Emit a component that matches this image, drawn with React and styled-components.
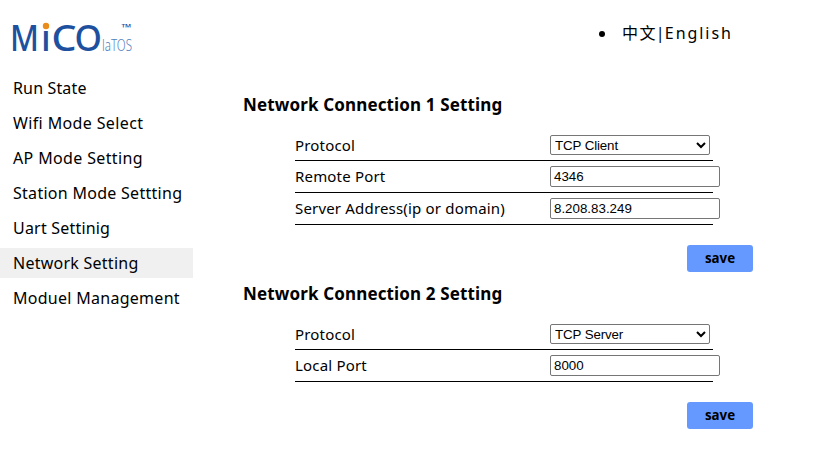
import React from 'react';
import styled, { createGlobalStyle } from 'styled-components';

const GlobalStyle = createGlobalStyle`
  * { box-sizing: border-box; }
  body {
    margin: 0;
    background: #fff;
    color: #000;
    font-family: "Noto Sans", "Noto Sans CJK SC", sans-serif;
    font-size: 16px;
  }
`;

const Page = styled.div`
  width: 831px;
  height: 472px;
  display: flex;
  flex-direction: column;
  overflow: hidden;
`;

const Header = styled.header`
  height: 73px;
  display: flex;
  justify-content: space-between;
  align-items: flex-start;
`;

const LogoMark = styled.svg`
  display: block;
  width: 150px;
  height: 70px;
  overflow: visible;
`;

const Languages = styled.ul`
  margin: 21px 0 0;
  padding: 0;
  width: 214px;
  line-height: 24px;
  white-space: nowrap;

  li { padding-left: 5px; }
`;

const Language = styled.span`
  letter-spacing: ${(p) => p.$spacing}px;
`;

const Divider = styled.span`
  display: inline-block;
  width: 8px;
  text-indent: -1px;
`;

const Body = styled.div`
  display: flex;
`;

const Sidebar = styled.nav`
  width: 193px;
  display: flex;
  flex-direction: column;
  gap: 5px;
`;

const NavItem = styled.a`
  height: 30px;
  padding-left: 13px;
  line-height: 30px;
  letter-spacing: ${(p) => p.$spacing || 0}px;
  white-space: nowrap;
  background: ${(p) => (p.$active ? '#f0f0f0' : 'transparent')};
`;

const Content = styled.main`
  width: 510px;
  margin-left: 50px;
  padding-top: 20px;
`;

const Section = styled.section`
  display: flex;
  flex-direction: column;
  margin-bottom: 10px;
`;

const Title = styled.h3`
  margin: 0 0 13px;
  font-size: 17px;
  font-weight: 700;
  line-height: 24px;
  letter-spacing: 0.14px;
  white-space: nowrap;
`;

const Row = styled.div`
  width: 418px;
  height: ${(p) => (p.$first ? 31 : 32)}px;
  margin-left: 52px;
  padding-top: 5px;
  display: flex;
  align-items: flex-start;
  border-bottom: 1px solid #000;
`;

const Label = styled.label`
  flex: 0 0 255px;
  font-size: 15px;
  line-height: 21px;
  letter-spacing: 0.18px;
  white-space: nowrap;
`;

const Select = styled.select`
  width: 160px;
  height: 20px;
  margin: 0;
  padding: 0;
  border: 1px solid #767676;
  border-radius: 2px;
  background: #fff;
  color: #000;
  font: 13.333px "Liberation Sans", Arial, sans-serif;
  letter-spacing: -0.12px;
`;

const Input = styled.input`
  flex: 0 0 170px;
  width: 170px;
  min-width: 0;
  height: 21px;
  padding: 1px 3px;
  border: 1px solid #767676;
  border-radius: 2px;
  background: #fff;
  color: #000;
  font: 13.333px "Liberation Sans", Arial, sans-serif;
`;

const SaveButton = styled.button`
  align-self: flex-end;
  width: 66px;
  height: 27px;
  margin-top: 20px;
  padding: 0;
  border: 0;
  border-radius: 3px;
  background: #6699ff;
  color: #000;
  font: 700 13.333px/27px "Noto Sans", sans-serif;
`;

const navigation = [
  { text: 'Run State', spacing: 0.15 },
  { text: 'Wifi Mode Select', spacing: 0.37 },
  { text: 'AP Mode Setting', spacing: 0.36 },
  { text: 'Station Mode Settting', spacing: 0.28 },
  { text: 'Uart Settinig', spacing: 0.2 },
  { text: 'Network Setting', spacing: 0.25, active: true },
  { text: 'Moduel Management', spacing: 0.28 },
];

const sections = [
  {
    title: 'Network Connection 1 Setting',
    rows: [
      { label: 'Protocol', options: ['TCP Client', 'TCP Server'], value: 'TCP Client' },
      { label: 'Remote Port', value: '4346' },
      { label: 'Server Address(ip or domain)', value: '8.208.83.249' },
    ],
  },
  {
    title: 'Network Connection 2 Setting',
    rows: [
      { label: 'Protocol', options: ['TCP Client', 'TCP Server'], value: 'TCP Server' },
      { label: 'Local Port', value: '8000' },
    ],
  },
];

function Logo() {
  return (
    <LogoMark viewBox="0 0 150 70" role="img" aria-label="MiCO IoT OS">
      <g fill="#1d519f" fontFamily="Noto Sans, sans-serif" fontSize="36" fontWeight="500">
        <text x="10" y="51" textLength="29" lengthAdjust="spacingAndGlyphs">M</text>
        <text x="41" y="51">ı</text>
        <text x="51.5" y="51" textLength="25" lengthAdjust="spacingAndGlyphs">C</text>
        <text x="74.5" y="51" textLength="27.5" lengthAdjust="spacingAndGlyphs">O</text>
      </g>
      <circle cx="46" cy="26" r="3.2" fill="#ea8c1c" />
      <g fill="#4f7fbd" fontFamily="Noto Sans, sans-serif" fontWeight="300">
        <text x="102" y="51" fontSize="16.5" textLength="30" lengthAdjust="spacingAndGlyphs">laTOS</text>
        <text x="121.5" y="30.5" fontSize="10" fontWeight="600" fill="#1d519f" textLength="10" lengthAdjust="spacingAndGlyphs">™</text>
      </g>
    </LogoMark>
  );
}

function Setting({ row, first }) {
  return (
    <Row $first={first}>
      <Label>{row.label}</Label>
      {row.options ? (
        <Select defaultValue={row.value}>
          {row.options.map((o) => <option key={o}>{o}</option>)}
        </Select>
      ) : (
        <Input defaultValue={row.value} />
      )}
    </Row>
  );
}

export default function App() {
  return (
    <Page>
      <GlobalStyle />
      <Header>
        <Logo />
        <Languages>
          <li>
            <Language $spacing={1.4}>中文</Language>
            <Divider>|</Divider>
            <Language $spacing={1.95}>English</Language>
          </li>
        </Languages>
      </Header>
      <Body>
        <Sidebar>
          {navigation.map((n) => (
            <NavItem key={n.text} $active={n.active} $spacing={n.spacing}>{n.text}</NavItem>
          ))}
        </Sidebar>
        <Content>
          {sections.map((s) => (
            <Section key={s.title}>
              <Title>{s.title}</Title>
              {s.rows.map((r, i) => <Setting key={r.label} row={r} first={i === 0} />)}
              <SaveButton>save</SaveButton>
            </Section>
          ))}
        </Content>
      </Body>
    </Page>
  );
}
